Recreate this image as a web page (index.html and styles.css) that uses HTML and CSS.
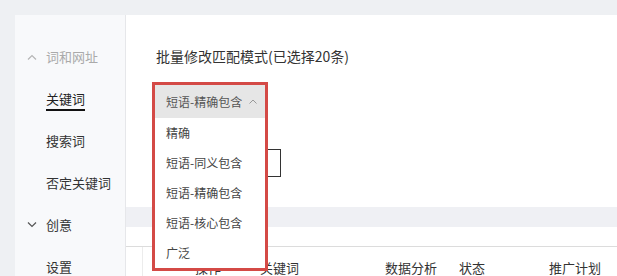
FILE: index.html
```html
<!DOCTYPE html>
<html lang="zh-CN">
<head>
    <meta charset="UTF-8">
    <title>批量修改匹配模式</title>
    <link rel="stylesheet" href="styles.css">
</head>
<body>
    <div class="page">
        <div class="sidebar">
            <div class="nav-group muted">
                <span class="chevron">
                    <svg width="10" height="6" viewBox="0 0 10 6"><polyline points="1,5.5 5,1.5 9,5.5" fill="none" stroke="#b5b5b5" stroke-width="1.2"/></svg>
                </span>
                词和网址
            </div>
            <div class="nav-item"><span class="active">关键词</span></div>
            <div class="nav-item">搜索词</div>
            <div class="nav-item">否定关键词</div>
            <div class="nav-group">
                <span class="chevron">
                    <svg width="10" height="6" viewBox="0 0 10 6"><polyline points="1,0.5 5,4.5 9,0.5" fill="none" stroke="#555" stroke-width="1.2"/></svg>
                </span>
                创意
            </div>
            <div class="nav-item">设置</div>
        </div>

        <div class="main">
            <div class="panel">
                <div class="panel-title">批量修改匹配模式(已选择20条)</div>
                <div class="select-slot"></div>
                <div class="actions">
                    <button class="btn">批量设置</button>
                </div>

                <div class="dropdown">
                    <div class="dropdown-head">
                        <span>短语-精确包含</span>
                        <svg width="8" height="5" viewBox="0 0 8 5"><polyline points="0.5,4.5 4,1 7.5,4.5" fill="none" stroke="#999" stroke-width="1"/></svg>
                    </div>
                    <div class="dropdown-option">精确</div>
                    <div class="dropdown-option">短语-同义包含</div>
                    <div class="dropdown-option">短语-精确包含</div>
                    <div class="dropdown-option">短语-核心包含</div>
                    <div class="dropdown-option">广泛</div>
                </div>
            </div>

            <div class="gap-band"></div>

            <div class="table">
                <div class="table-spacer"></div>
                <div class="table-head">
                    <div class="cell check"></div>
                    <div class="cell first">操作</div>
                    <div class="cell">关键词</div>
                    <div class="cell">数据分析</div>
                    <div class="cell">状态</div>
                    <div class="cell">推广计划</div>
                </div>
            </div>
        </div>
    </div>
</body>
</html>
```

FILE: styles.css
```css
* {
    margin: 0;
    padding: 0;
    box-sizing: border-box;
}

body {
    font-family: 'Noto Sans CJK SC', 'Microsoft YaHei', sans-serif;
    background: #eef0f3;
    color: #333;
    overflow: hidden;
}

.page {
    display: flex;
    padding: 15px 0 0 15px;
    height: 276px;
    overflow: hidden;
}

.sidebar {
    width: 111px;
    flex-shrink: 0;
    background: #f8f9fb;
    border-right: 1px solid #e6e7ea;
    padding-top: 21px;
}

.nav-group,
.nav-item {
    height: 42px;
    line-height: 42px;
    font-size: 13px;
    padding-left: 31px;
    color: #333;
}

.nav-group {
    display: flex;
    align-items: center;
    padding-left: 12px;
}

.nav-group.muted {
    color: #aaa;
}

.chevron {
    width: 19px;
    display: flex;
    align-items: center;
}

.active {
    display: inline-block;
    line-height: 18px;
    padding-bottom: 1px;
    border-bottom: 2px solid #111;
    color: #222;
}

.main {
    flex: 1;
    display: flex;
    flex-direction: column;
}

.panel {
    position: relative;
    flex-shrink: 0;
    background: #fff;
    height: 192px;
    padding: 31px 0 0 30px;
}

.panel-title {
    font-size: 14px;
    line-height: 20px;
    color: #333;
}

.select-slot {
    height: 83px;
}

.actions {
    display: flex;
}

.btn {
    width: 92px;
    height: 28px;
    margin-left: 33px;
    background: #fff;
    border: 1px solid #333;
    font-family: inherit;
    font-size: 12px;
    color: #333;
}

.dropdown {
    position: absolute;
    left: 26px;
    top: 67px;
    width: 116px;
    border: 3px solid #d44a46;
    background: #fff;
    z-index: 2;
}

.dropdown-head {
    display: flex;
    align-items: center;
    justify-content: space-between;
    height: 33px;
    padding: 0 8px 0 11px;
    background: #e6e6e6;
    font-size: 12px;
    color: #555;
}

.dropdown-option {
    height: 30px;
    line-height: 30px;
    padding-left: 11px;
    font-size: 12px;
    color: #444;
}

.gap-band {
    flex-shrink: 0;
    height: 20px;
    background: #eff0f4;
}

.table {
    flex-shrink: 0;
    background: #fff;
}

.table-spacer {
    height: 20px;
    border-bottom: 1px solid #dcdcdc;
}

.table-head {
    display: grid;
    grid-template-columns: 17px 105px 125px 74px 90px 1fr;
    height: 42px;
}

.cell {
    font-size: 13px;
    line-height: 42px;
    padding-left: 12px;
    color: #333;
}

.cell.check {
    padding: 0;
    border-right: 1px solid #ececec;
}

.cell.first {
    padding-left: 52px;
}
```
